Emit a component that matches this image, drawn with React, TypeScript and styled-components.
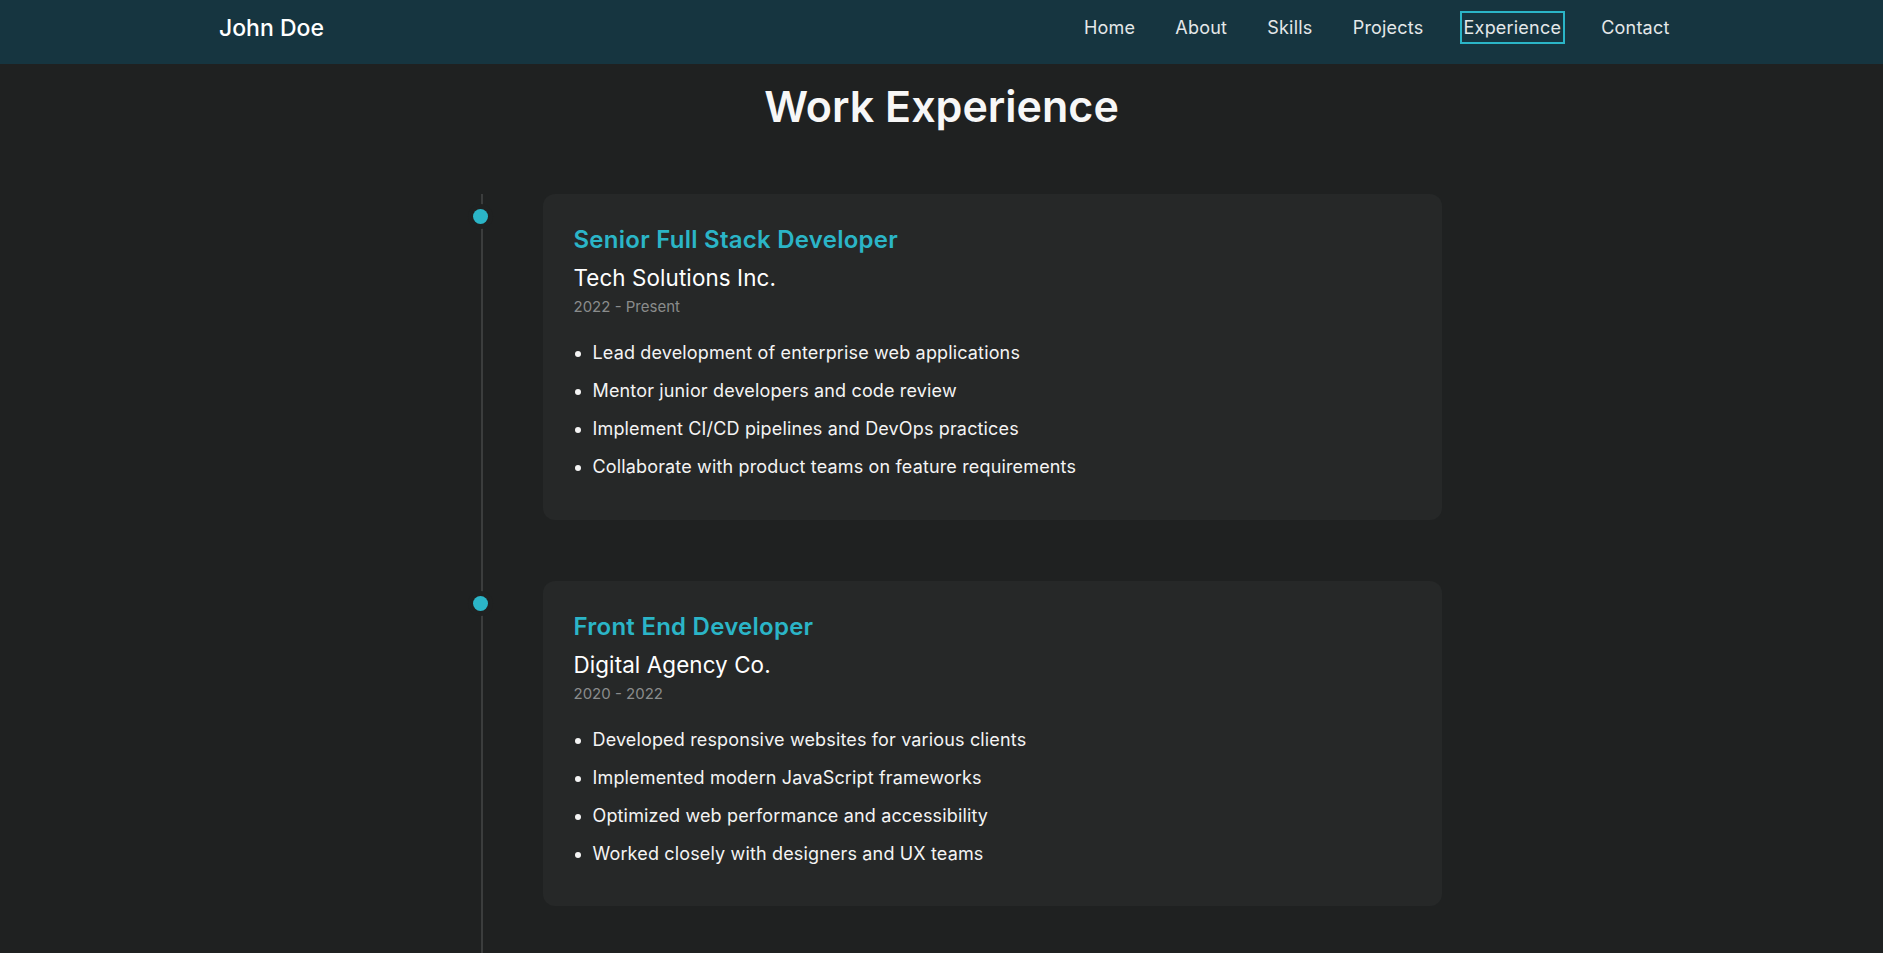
import React from "react";
import styled, { createGlobalStyle } from "styled-components";

const GlobalStyle = createGlobalStyle`
  * { box-sizing: border-box; }
  html, body { margin: 0; padding: 0; }
  body {
    background: #1f2121;
    color: #f2f2f2;
    font-family: Inter, "Noto Sans", "Liberation Sans", sans-serif;
    overflow-x: hidden;
  }
`;

const Header = styled.header`
  height: 64px;
  background: #163540;
  padding: 0 210px 9px 219px;
`;

const HeaderInner = styled.div`
  height: 55px;
  display: flex;
  align-items: center;
  justify-content: space-between;
`;

const Logo = styled.a`
  font-size: 23px;
  font-weight: 500;
  color: #ffffff;
  text-decoration: none;
`;

const Nav = styled.nav`
  display: flex;
  align-items: center;
  gap: 33.2px;
`;

const NavLink = styled.a<{ $active?: boolean }>`
  font-size: 18px;
  letter-spacing: 0.2px;
  color: #e4e8e9;
  text-decoration: none;
  padding: 4px 1.5px;
  border: 2px solid ${(p) => (p.$active ? "#2bb5c7" : "transparent")};
`;

const Main = styled.main`
  padding-top: 17px;
`;

const Title = styled.h1`
  margin: 0 0 61px;
  text-align: center;
  font-size: 43px;
  line-height: 1.2;
  font-weight: 600;
  color: #f7f7f7;
`;

const Timeline = styled.div`
  position: relative;
  width: 1000px;
  margin: 0 auto;
  padding-left: 101px;
  display: flex;
  flex-direction: column;
  gap: 61px;
  &::before {
    content: "";
    position: absolute;
    left: 39px;
    top: 0;
    bottom: 0;
    width: 2px;
    background: #3b3d3d;
  }
`;

const Item = styled.div`
  position: relative;
`;

const Dot = styled.span`
  position: absolute;
  left: -70px;
  top: 15px;
  width: 15px;
  height: 15px;
  border-radius: 50%;
  background: #2bb5c7;
  box-shadow: 0 0 0 5px #1f2121;
`;

const Card = styled.article`
  background: #262828;
  border-radius: 12px;
  padding: 33px 32px 31px 31px;
`;

const Role = styled.h3`
  margin: 0 0 10px;
  font-size: 24px;
  line-height: 26px;
  font-weight: 600;
  letter-spacing: 0.25px;
  color: #2bb5c7;
`;

const Company = styled.h4`
  margin: 0 0 4.7px;
  font-size: 22.4px;
  line-height: 30px;
  font-weight: 400;
  letter-spacing: 0.1px;
  color: #ffffff;
`;

const Period = styled.div`
  font-size: 15px;
  line-height: 20px;
  color: #8a8c8c;
`;

const Duties = styled.ul`
  margin: 22.2px 0 6.3px;
  padding-left: 19px;
`;

const Duty = styled.li`
  font-size: 18px;
  line-height: 28.8px;
  letter-spacing: 0.15px;
  color: #f4f4f4;
  & + & {
    margin-top: 9.2px;
  }
`;

const jobs = [
  {
    role: "Senior Full Stack Developer",
    company: "Tech Solutions Inc.",
    period: "2022 - Present",
    duties: [
      "Lead development of enterprise web applications",
      "Mentor junior developers and code review",
      "Implement CI/CD pipelines and DevOps practices",
      "Collaborate with product teams on feature requirements",
    ],
  },
  {
    role: "Front End Developer",
    company: "Digital Agency Co.",
    period: "2020 - 2022",
    duties: [
      "Developed responsive websites for various clients",
      "Implemented modern JavaScript frameworks",
      "Optimized web performance and accessibility",
      "Worked closely with designers and UX teams",
    ],
  },
  {
    role: "Junior Web Developer",
    company: "StartUp Labs",
    period: "2018 - 2020",
    duties: [
      "Built and maintained company websites",
      "Assisted in developing internal tools",
      "Fixed bugs and improved code quality",
    ],
  },
];

const navItems = ["Home", "About", "Skills", "Projects", "Experience", "Contact"];

export default function App() {
  return (
    <>
      <GlobalStyle />
      <Header>
        <HeaderInner>
          <Logo href="#">John Doe</Logo>
          <Nav>
            {navItems.map((n) => (
              <NavLink key={n} href="#" $active={n === "Experience"}>
                {n}
              </NavLink>
            ))}
          </Nav>
        </HeaderInner>
      </Header>
      <Main>
        <Title>Work Experience</Title>
        <Timeline>
          {jobs.map((j) => (
            <Item key={j.role}>
              <Dot />
              <Card>
                <Role>{j.role}</Role>
                <Company>{j.company}</Company>
                <Period>{j.period}</Period>
                <Duties>
                  {j.duties.map((d) => (
                    <Duty key={d}>{d}</Duty>
                  ))}
                </Duties>
              </Card>
            </Item>
          ))}
        </Timeline>
      </Main>
    </>
  );
}
